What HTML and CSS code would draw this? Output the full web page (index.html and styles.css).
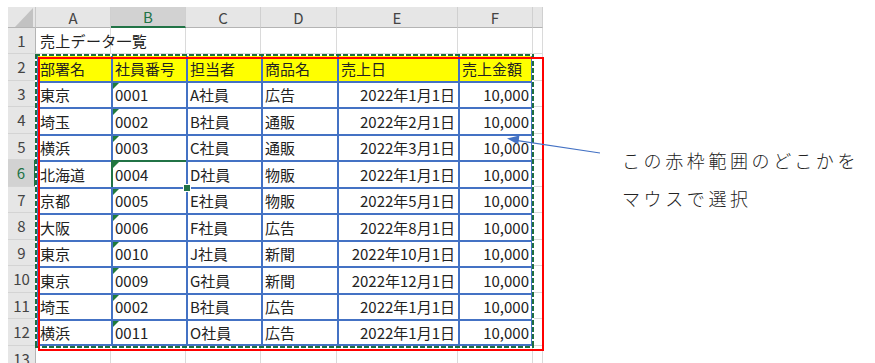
FILE: index.html
```html
<!DOCTYPE html>
<html lang="ja">
<head>
<meta charset="utf-8">
<title>売上データ一覧</title>
<link rel="stylesheet" href="styles.css">
</head>
<body>
<div class="page">
  <div class="sheet">
    <div class="corner"></div>
    <div class="ch">A</div><div class="ch sel">B</div><div class="ch">C</div><div class="ch">D</div><div class="ch">E</div><div class="ch">F</div><div class="ch"></div>

    <div class="rh">1</div>
    <div class="c title">売上データ一覧</div><div class="c"></div><div class="c"></div><div class="c"></div><div class="c"></div><div class="c"></div><div class="c"></div>

    <div class="rh">2</div>
    <div class="t hd">部署名</div><div class="t hd">社員番号</div><div class="t hd">担当者</div><div class="t hd">商品名</div><div class="t hd">売上日</div><div class="t hd r">売上金額</div><div class="c"></div>

    <div class="rh">3</div>
    <div class="t">東京</div><div class="t tri">0001</div><div class="t">A社員</div><div class="t">広告</div><div class="t num">2022年1月1日</div><div class="t num r">10,000</div><div class="c"></div>

    <div class="rh">4</div>
    <div class="t">埼玉</div><div class="t tri">0002</div><div class="t">B社員</div><div class="t">通販</div><div class="t num">2022年2月1日</div><div class="t num r">10,000</div><div class="c"></div>

    <div class="rh">5</div>
    <div class="t">横浜</div><div class="t tri">0003</div><div class="t">C社員</div><div class="t">通販</div><div class="t num">2022年3月1日</div><div class="t num r">10,000</div><div class="c"></div>

    <div class="rh sel">6</div>
    <div class="t">北海道</div><div class="t tri active">0004<span class="handle"></span></div><div class="t">D社員</div><div class="t">物販</div><div class="t num">2022年1月1日</div><div class="t num r">10,000</div><div class="c"></div>

    <div class="rh">7</div>
    <div class="t">京都</div><div class="t tri">0005</div><div class="t">E社員</div><div class="t">物販</div><div class="t num">2022年5月1日</div><div class="t num r">10,000</div><div class="c"></div>

    <div class="rh">8</div>
    <div class="t">大阪</div><div class="t tri">0006</div><div class="t">F社員</div><div class="t">広告</div><div class="t num">2022年8月1日</div><div class="t num r">10,000</div><div class="c"></div>

    <div class="rh">9</div>
    <div class="t">東京</div><div class="t tri">0010</div><div class="t">J社員</div><div class="t">新聞</div><div class="t num">2022年10月1日</div><div class="t num r">10,000</div><div class="c"></div>

    <div class="rh">10</div>
    <div class="t">東京</div><div class="t tri">0009</div><div class="t">G社員</div><div class="t">新聞</div><div class="t num">2022年12月1日</div><div class="t num r">10,000</div><div class="c"></div>

    <div class="rh">11</div>
    <div class="t">埼玉</div><div class="t tri">0002</div><div class="t">B社員</div><div class="t">広告</div><div class="t num">2022年1月1日</div><div class="t num r">10,000</div><div class="c"></div>

    <div class="rh">12</div>
    <div class="t b">横浜</div><div class="t b tri">0011</div><div class="t b">O社員</div><div class="t b">広告</div><div class="t b num">2022年1月1日</div><div class="t b num r">10,000</div><div class="c"></div>

    <div class="rh">13</div>
    <div class="c"></div><div class="c"></div><div class="c"></div><div class="c"></div><div class="c"></div><div class="c"></div><div class="c"></div>

    <div class="marquee"></div>
    <div class="redbox"></div>
  </div>

  <div class="note">
    <p class="note-line">この赤枠範囲のどこかを</p>
    <p class="note-line">マウスで選択</p>
  </div>

  <svg class="arrow" width="875" height="363" viewBox="0 0 875 363" aria-hidden="true">
    <line x1="600" y1="153" x2="516" y2="140.3" stroke="#4472c4" stroke-width="1.2"/>
    <polygon points="507,138.5 519.4,135.6 518.2,144.4" fill="#4472c4"/>
  </svg>
</div>
</body>
</html>
```

FILE: styles.css
```css
html, body {
  margin: 0;
  padding: 0;
  background: #ffffff;
}

.page {
  position: relative;
  display: flex;
  align-items: flex-start;
  width: 875px;
  height: 363px;
  overflow: hidden;
  font-family: "Noto Sans CJK JP", "Noto Sans", sans-serif;
  color: #222222;
}

.sheet {
  position: relative;
  margin: 7px 0 0 8px;
  display: grid;
  grid-template-columns: 28px 75px 75px 75px 76px 121px 75px 10px;
  grid-template-rows: 21px 26px repeat(12, 26.5px);
  font-size: 15px;
}

.sheet > div {
  box-sizing: border-box;
  display: flex;
  align-items: center;
  white-space: nowrap;
  min-width: 0;
}

.corner {
  position: relative;
  background: #e6e6e6;
  border-right: 1px solid #c8c8c8;
  border-bottom: 1px solid #b4b4b4;
}

.corner::before {
  content: "";
  position: absolute;
  left: 7px;
  top: 1px;
  width: 18px;
  height: 19px;
  background: #c2c2c2;
  clip-path: polygon(100% 0, 100% 100%, 0 100%);
}

.ch {
  justify-content: center;
  background: #e6e6e6;
  color: #444444;
  border-right: 1px solid #d0d0d0;
  border-bottom: 1px solid #b4b4b4;
}

.ch.sel {
  background: #d2d2d2;
  color: #217346;
  border-bottom: 2px solid #217346;
}

.rh {
  justify-content: center;
  background: #e6e6e6;
  color: #444444;
  border-right: 1px solid #b4b4b4;
  border-bottom: 1px solid #d4d4d4;
}

.rh.sel {
  background: #d2d2d2;
  color: #217346;
  border-right: 2px solid #217346;
}

.c {
  border-right: 1px solid #dadada;
  border-bottom: 1px solid #dadada;
  padding-left: 4px;
}

.title {
  overflow: visible;
  letter-spacing: 0.3px;
}

.t {
  position: relative;
  border-top: 2px solid #4472c4;
  border-left: 2px solid #4472c4;
  padding: 0 2px;
}

.t.r {
  border-right: 2px solid #4472c4;
}

.t.b {
  border-bottom: 2px solid #4472c4;
}

.t.hd {
  background: #ffff00;
}

.t.num {
  justify-content: flex-end;
  padding-right: 3px;
}

.t.num.r {
  padding-right: 2px;
}

.tri::before {
  content: "";
  position: absolute;
  left: 0;
  top: 0;
  width: 0;
  height: 0;
  border-top: 6px solid #1f7a3c;
  border-right: 6px solid transparent;
}

.active::after {
  content: "";
  position: absolute;
  left: -2px;
  top: -2px;
  width: calc(100% + 4px);
  height: calc(100% + 4px);
  box-sizing: border-box;
  border: 2px solid #217346;
}

.handle {
  position: absolute;
  right: -5px;
  bottom: -5px;
  width: 6px;
  height: 6px;
  background: #217346;
  border: 1px solid #ffffff;
  z-index: 2;
}

.marquee {
  position: absolute;
  left: 27px;
  top: 47px;
  width: 499px;
  height: 294px;
  pointer-events: none;
  background:
    repeating-linear-gradient(90deg, #1e6e40 0 5px, #ffffff 5px 7px) left top / 100% 2px no-repeat,
    repeating-linear-gradient(90deg, #1e6e40 0 5px, #ffffff 5px 7px) left bottom / 100% 2px no-repeat,
    repeating-linear-gradient(180deg, #1e6e40 0 5px, #ffffff 5px 7px) left top / 2px 100% no-repeat,
    repeating-linear-gradient(180deg, #1e6e40 0 5px, #ffffff 5px 7px) right top / 2px 100% no-repeat;
}

.redbox {
  position: absolute;
  left: 30px;
  top: 50px;
  width: 506px;
  height: 294px;
  box-sizing: border-box;
  border: 2px solid #ff0000;
  pointer-events: none;
}

.note {
  margin: 141px 0 0 79px;
  font-size: 18px;
  font-weight: 300;
  letter-spacing: 3.6px;
  color: #222222;
}

.note-line {
  margin: 0;
  line-height: 38px;
  white-space: nowrap;
}

.arrow {
  position: absolute;
  left: 0;
  top: 0;
  pointer-events: none;
}
```
